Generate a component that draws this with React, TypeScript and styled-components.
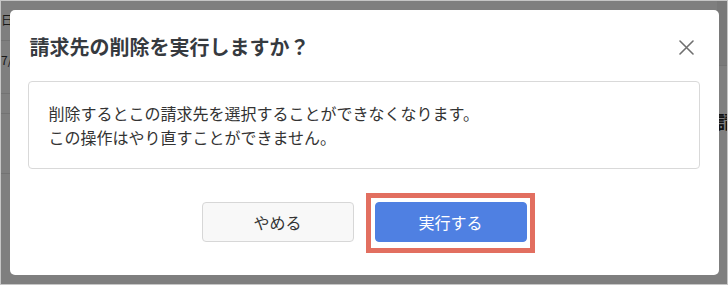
import React from 'react';
import styled, { createGlobalStyle } from 'styled-components';

const GlobalStyle = createGlobalStyle`
  body {
    margin: 0;
    font-family: "Noto Sans CJK JP", "Noto Sans", sans-serif;
  }
`;

const Frame = styled.div`
  position: relative;
  width: 728px;
  height: 285px;
  box-sizing: border-box;
  border: 1px solid #c6c6c6;
  background: #ffffff;
  overflow: hidden;
`;

/* page that sits behind the dialog */
const Backdrop = styled.div`
  display: flex;
  justify-content: space-between;
  height: 100%;
`;

const ListColumn = styled.div`
  width: 120px;
  display: flex;
  flex-direction: column;
`;

const ListRow = styled.div<{ $h: number }>`
  height: ${({ $h }) => $h}px;
  box-sizing: border-box;
  border-bottom: 1px solid #e6e6e6;
  padding: 10px 0 0 0;
  font-size: 12px;
  color: #333;
`;

const SideColumn = styled.div`
  width: 110px;
  flex-shrink: 0;
  margin-right: -100px;
  display: flex;
  flex-direction: column;
`;

const SideBand = styled.div`
  height: 64px;
  border-bottom: 1px solid #e6e6e6;
  background: #f2f2f2;
`;

const SideHeading = styled.div`
  padding: 42px 0 0 0;
  font-size: 18px;
  font-weight: 700;
  color: #222;
`;

const Overlay = styled.div`
  position: absolute;
  inset: 0;
  background: rgba(0, 0, 0, 0.5);
  display: flex;
  align-items: center;
  justify-content: center;
`;

const Modal = styled.div`
  width: 709px;
  height: 265px;
  box-sizing: border-box;
  background: #ffffff;
  border-radius: 5px;
  display: flex;
  flex-direction: column;
`;

const Header = styled.div`
  display: flex;
  align-items: center;
  justify-content: space-between;
  padding: 23px 24px 0 20px;
`;

const Title = styled.h2`
  margin: 0;
  font-size: 20px;
  line-height: 28px;
  font-weight: 700;
  color: #363a3f;
`;

const CloseButton = styled.button`
  display: flex;
  align-items: center;
  justify-content: center;
  width: 16px;
  height: 16px;
  padding: 0;
  border: none;
  background: none;
  color: #6f6f6f;
  cursor: pointer;
`;

const MessageBox = styled.div`
  margin: 20px 19px 0 18px;
  padding: 19px 20px;
  border: 1px solid #d9d9d9;
  border-radius: 4px;
  font-size: 16px;
  line-height: 24px;
  color: #333333;
`;

const Footer = styled.div`
  display: flex;
  justify-content: center;
  gap: 21px;
  margin-top: 33px;
`;

const Button = styled.button<{ $primary?: boolean }>`
  width: 152px;
  height: 40px;
  box-sizing: border-box;
  border-radius: 4px;
  font-family: inherit;
  font-size: 16px;
  cursor: pointer;
  border: 1px solid ${({ $primary }) => ($primary ? '#4f80e2' : '#d7d7d7')};
  background: ${({ $primary }) => ($primary ? '#4f80e2' : '#f8f8f8')};
  color: ${({ $primary }) => ($primary ? '#ffffff' : '#333333')};
`;

const Highlighted = styled.div`
  position: relative;
`;

const HighlightMark = styled.span`
  position: absolute;
  top: -9px;
  left: -9px;
  right: -8px;
  bottom: -11px;
  border: 5px solid #e26f60;
  pointer-events: none;
`;

const CloseIcon = () => (
  <svg width="15" height="15" viewBox="0 0 15 15" fill="none">
    <path d="M1 1L14 14M14 1L1 14" stroke="currentColor" strokeWidth="1.6" strokeLinecap="round" />
  </svg>
);

export default function App() {
  return (
    <>
      <GlobalStyle />
      <Frame>
        <Backdrop>
          <ListColumn>
            <ListRow $h={40}>日付</ListRow>
            <ListRow $h={53}>7/</ListRow>
            <ListRow $h={20} />
            <ListRow $h={60} />
          </ListColumn>
          <SideColumn>
            <SideBand />
            <SideHeading>請求先</SideHeading>
          </SideColumn>
        </Backdrop>
        <Overlay>
          <Modal role="dialog">
            <Header>
              <Title>請求先の削除を実行しますか？</Title>
              <CloseButton aria-label="閉じる">
                <CloseIcon />
              </CloseButton>
            </Header>
            <MessageBox>
              削除するとこの請求先を選択することができなくなります。
              <br />
              この操作はやり直すことができません。
            </MessageBox>
            <Footer>
              <Button>やめる</Button>
              <Highlighted>
                <Button $primary>実行する</Button>
                <HighlightMark />
              </Highlighted>
            </Footer>
          </Modal>
        </Overlay>
      </Frame>
    </>
  );
}
